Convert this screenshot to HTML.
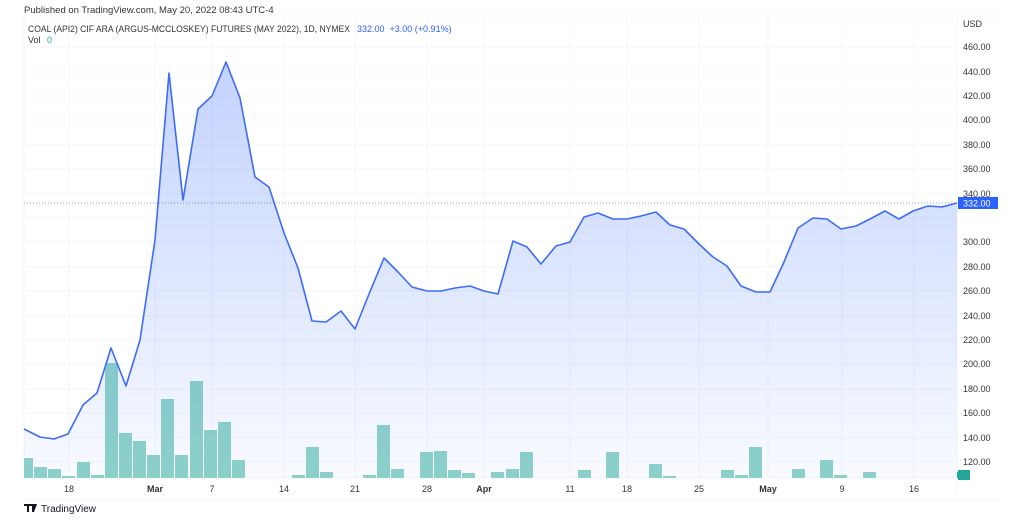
<!DOCTYPE html>
<html><head><style>
html,body{margin:0;padding:0;background:#fff;width:1024px;height:521px;overflow:hidden;font-family:"Liberation Sans",sans-serif}
</style></head><body>
<svg width="1024" height="521" xmlns="http://www.w3.org/2000/svg" font-family="Liberation Sans, sans-serif">
<defs><linearGradient id="g" x1="0" y1="0" x2="0" y2="1"><stop offset="0" stop-color="#2962ff" stop-opacity="0.28"/><stop offset="1" stop-color="#2962ff" stop-opacity="0.03"/></linearGradient></defs>
<text x="24" y="13" font-size="9.5" fill="#333">Published on TradingView.com, May 20, 2022 08:43 UTC-4</text>
<g stroke="#f3f5fa" stroke-width="1">
<line x1="24" y1="16" x2="1000" y2="16"/><line x1="24" y1="16" x2="24" y2="478"/>
<line x1="24" y1="47" x2="957" y2="47"/><line x1="24" y1="72" x2="957" y2="72"/><line x1="24" y1="96" x2="957" y2="96"/><line x1="24" y1="120" x2="957" y2="120"/><line x1="24" y1="145" x2="957" y2="145"/><line x1="24" y1="169" x2="957" y2="169"/><line x1="24" y1="194" x2="957" y2="194"/><line x1="24" y1="218" x2="957" y2="218"/><line x1="24" y1="242" x2="957" y2="242"/><line x1="24" y1="267" x2="957" y2="267"/><line x1="24" y1="291" x2="957" y2="291"/><line x1="24" y1="316" x2="957" y2="316"/><line x1="24" y1="340" x2="957" y2="340"/><line x1="24" y1="364" x2="957" y2="364"/><line x1="24" y1="389" x2="957" y2="389"/><line x1="24" y1="413" x2="957" y2="413"/><line x1="24" y1="438" x2="957" y2="438"/><line x1="24" y1="462" x2="957" y2="462"/>
<line x1="69" y1="16" x2="69" y2="478"/><line x1="155" y1="16" x2="155" y2="478"/><line x1="212" y1="16" x2="212" y2="478"/><line x1="284" y1="16" x2="284" y2="478"/><line x1="355" y1="16" x2="355" y2="478"/><line x1="427" y1="16" x2="427" y2="478"/><line x1="484" y1="16" x2="484" y2="478"/><line x1="570" y1="16" x2="570" y2="478"/><line x1="627" y1="16" x2="627" y2="478"/><line x1="699" y1="16" x2="699" y2="478"/><line x1="768" y1="16" x2="768" y2="478"/><line x1="842" y1="16" x2="842" y2="478"/><line x1="914" y1="16" x2="914" y2="478"/>
<line x1="957" y1="16" x2="957" y2="500"/><line x1="24" y1="478" x2="957" y2="478"/><line x1="24" y1="500" x2="1000" y2="500"/>
</g>
<text x="28" y="32" font-size="9" fill="#333" textLength="322" lengthAdjust="spacingAndGlyphs">COAL (API2) CIF ARA (ARGUS-MCCLOSKEY) FUTURES (MAY 2022), 1D, NYMEX</text>
<text x="357" y="32" font-size="9" fill="#2962ff">332.00 &#160;+3.00 (+0.91%)</text>
<text x="28" y="43" font-size="9" fill="#333">Vol <tspan fill="#26a69a" dx="4">0</tspan></text>
<g fill="#8fd3c8">
<rect x="24" y="458" width="9" height="20"/><rect x="34" y="467" width="13" height="11"/><rect x="48" y="469" width="13" height="9"/><rect x="62" y="476" width="13" height="2"/><rect x="77" y="462" width="13" height="16"/><rect x="91" y="475" width="13" height="3"/><rect x="105" y="363" width="13" height="115"/><rect x="119" y="433" width="13" height="45"/><rect x="133" y="441" width="13" height="37"/><rect x="147" y="455" width="13" height="23"/><rect x="161" y="399" width="13" height="79"/><rect x="175" y="455" width="13" height="23"/><rect x="190" y="381" width="13" height="97"/><rect x="204" y="430" width="13" height="48"/><rect x="218" y="422" width="13" height="56"/><rect x="232" y="460" width="13" height="18"/><rect x="292" y="475" width="13" height="3"/><rect x="306" y="447" width="13" height="31"/><rect x="320" y="472" width="13" height="6"/><rect x="363" y="475" width="13" height="3"/><rect x="377" y="425" width="13" height="53"/><rect x="391" y="469" width="13" height="9"/><rect x="420" y="452" width="13" height="26"/><rect x="434" y="451" width="13" height="27"/><rect x="448" y="470" width="13" height="8"/><rect x="462" y="473" width="13" height="5"/><rect x="491" y="472" width="13" height="6"/><rect x="506" y="469" width="13" height="9"/><rect x="520" y="452" width="13" height="26"/><rect x="578" y="470" width="13" height="8"/><rect x="606" y="452" width="13" height="26"/><rect x="649" y="464" width="13" height="14"/><rect x="663" y="476" width="13" height="2"/><rect x="721" y="470" width="13" height="8"/><rect x="735" y="475" width="13" height="3"/><rect x="749" y="447" width="13" height="31"/><rect x="792" y="469" width="13" height="9"/><rect x="820" y="460" width="13" height="18"/><rect x="834" y="475" width="13" height="3"/><rect x="863" y="472" width="13" height="6"/>
</g>
<path fill="url(#g)" d="M24,429 L40,437 54,439 68,434 83,405 97,393 111,348 126,386 140,340 155,240 169,73 183,200 198,109 212,96 226,62 240,98 255,177 269,187 284,233 298,268 312,321 326,322 341,311 355,329 369,294 384,258 398,272 412,287 427,291 441,291 455,288 470,286 484,291 498,294 513,241 527,247 541,264 556,246 570,242 584,217 598,213 613,219 627,219 641,216 656,212 670,225 684,229 699,244 713,257 727,266 741,286 756,292 770,292 784,262 798,228 813,218 827,219 841,229 856,226 870,219 885,211 899,219 913,211 928,206 942,207 957,203 L957,478 L24,478Z"/>
<polyline fill="none" stroke="#3d6bfa" stroke-width="1.6" stroke-linejoin="round" points="24,429 40,437 54,439 68,434 83,405 97,393 111,348 126,386 140,340 155,240 169,73 183,200 198,109 212,96 226,62 240,98 255,177 269,187 284,233 298,268 312,321 326,322 341,311 355,329 369,294 384,258 398,272 412,287 427,291 441,291 455,288 470,286 484,291 498,294 513,241 527,247 541,264 556,246 570,242 584,217 598,213 613,219 627,219 641,216 656,212 670,225 684,229 699,244 713,257 727,266 741,286 756,292 770,292 784,262 798,228 813,218 827,219 841,229 856,226 870,219 885,211 899,219 913,211 928,206 942,207 957,203"/>
<line x1="24" y1="203" x2="957" y2="203" stroke="#2962ff" stroke-width="1" stroke-dasharray="1,2" opacity="0.6"/>
<g font-size="9" fill="#333">
<text x="963" y="27">USD</text>
<text x="963" y="50">460.00</text><text x="963" y="75">440.00</text><text x="963" y="99">420.00</text><text x="963" y="123">400.00</text><text x="963" y="148">380.00</text><text x="963" y="172">360.00</text><text x="963" y="197">340.00</text><text x="963" y="245">300.00</text><text x="963" y="270">280.00</text><text x="963" y="294">260.00</text><text x="963" y="319">240.00</text><text x="963" y="343">220.00</text><text x="963" y="367">200.00</text><text x="963" y="392">180.00</text><text x="963" y="416">160.00</text><text x="963" y="441">140.00</text><text x="963" y="465">120.00</text>
</g>
<rect x="958" y="197" width="40" height="12" fill="#2962ff"/>
<text x="963" y="206.5" font-size="9" fill="#fff">332.00</text>
<rect x="957" y="472" width="13" height="6" fill="#26a69a"/>
<rect x="958" y="470" width="12" height="10" fill="#26a69a"/>
<g font-size="9" fill="#333" text-anchor="middle">
<text x="69" y="492">18</text><text x="155" y="492" font-weight="bold">Mar</text><text x="212" y="492">7</text><text x="284" y="492">14</text><text x="355" y="492">21</text><text x="427" y="492">28</text><text x="484" y="492" font-weight="bold">Apr</text><text x="570" y="492">11</text><text x="627" y="492">18</text><text x="699" y="492">25</text><text x="768" y="492" font-weight="bold">May</text><text x="842" y="492">9</text><text x="914" y="492">16</text>
</g>
<path d="M24,504 h8 v2 h-3 v6 h-2 v-6 h-3z M32,504 h5 l-3,8 h-2z" fill="#131722"/>
<text x="41" y="512" font-size="10" fill="#131722">TradingView</text>
</svg>
</body></html>
